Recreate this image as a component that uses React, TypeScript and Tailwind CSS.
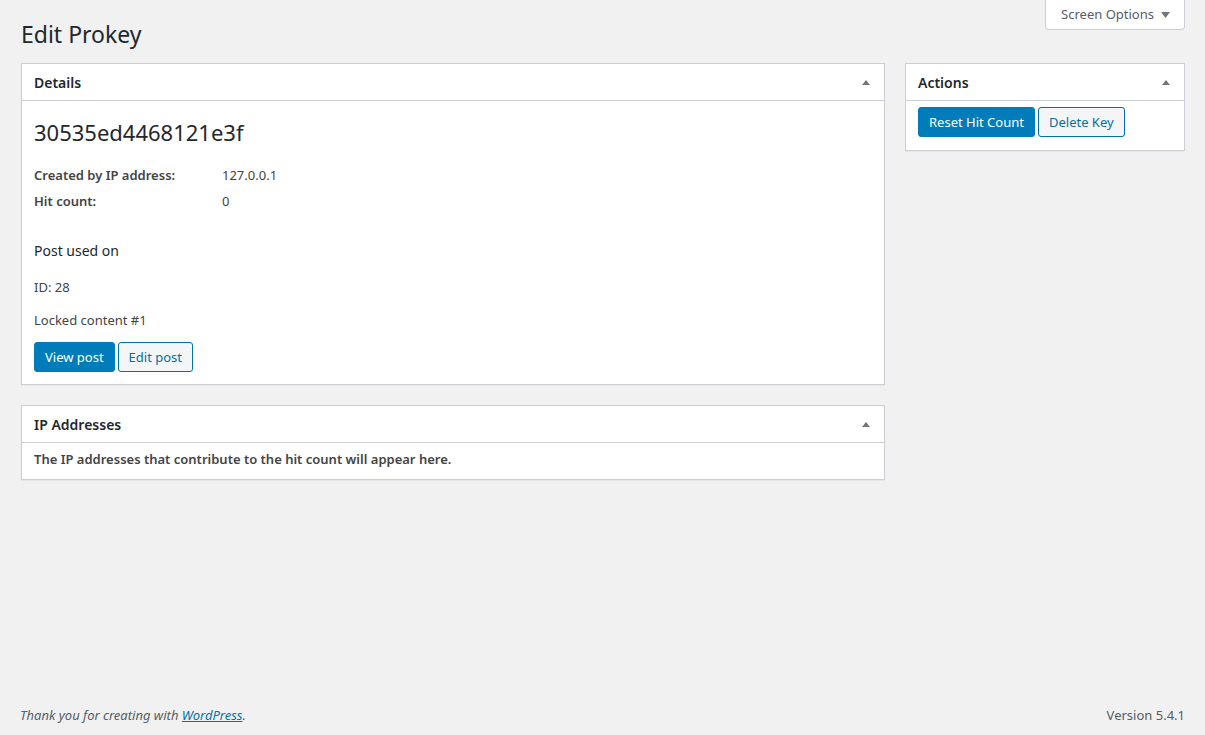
import React from "react";

const font = { fontFamily: '"Noto Sans", "Open Sans", sans-serif' };

function Toggle() {
  return (
    <svg width="10" height="6" viewBox="0 0 10 6" className="text-[#72777c]">
      <path d="M1 6 L5 1 L9 6 Z" fill="currentColor" />
    </svg>
  );
}

function Postbox({ title, children }: { title: string; children: React.ReactNode }) {
  return (
    <div className="bg-white border border-[#ccd0d4] shadow-[0_1px_1px_rgba(0,0,0,0.04)]">
      <div className="flex items-center justify-between h-[37px] pl-3 pr-[13px] border-b border-[#ccd0d4]">
        <h2 className="text-[14px] font-semibold text-[#23282d]">{title}</h2>
        <Toggle />
      </div>
      {children}
    </div>
  );
}

function PrimaryButton({ children }: { children: React.ReactNode }) {
  return (
    <button className="h-[30px] px-[10px] rounded-[3px] bg-[#007cba] border border-[#007cba] text-white text-[13px] leading-[28px]">
      {children}
    </button>
  );
}

function SecondaryButton({ children }: { children: React.ReactNode }) {
  return (
    <button className="h-[30px] px-[10px] rounded-[3px] bg-[#f3f5f6] border border-[#0071a1] text-[#0071a1] text-[13px] leading-[28px]">
      {children}
    </button>
  );
}

export default function App() {
  return (
    <div style={font} className="min-h-screen bg-[#f1f1f1] text-[#444] text-[13px] flex flex-col">
      <div className="flex justify-end pr-5">
        <div className="flex items-center gap-[7px] h-[30px] pl-[15px] pr-[14px] bg-white border border-t-0 border-[#ccd0d4] rounded-b-[4px] text-[13px] text-[#555d66]">
          <span>Screen Options</span>
          <svg width="9" height="6" viewBox="0 0 9 6">
            <path d="M0 0 L9 0 L4.5 6 Z" fill="#72777c" />
          </svg>
        </div>
      </div>

      <div className="pl-[21px] pr-5 flex-1">
        <h1 className="text-[23px] leading-[29px] font-normal text-[#23282d] -mt-[10px] mb-[14px]">Edit Prokey</h1>

        <div className="flex gap-5 items-start">
          <div className="flex-1 flex flex-col gap-5">
            <Postbox title="Details">
              <div className="px-3 pb-3">
                <div className="text-[22px] text-[#23282d] mt-[17px] leading-[28px]">30535ed4468121e3f</div>
                <div className="mt-[20px] flex flex-col gap-[8px]">
                  <div className="flex leading-[18px]">
                    <span className="w-[188px] font-semibold text-[#444]">Created by IP address:</span>
                    <span>127.0.0.1</span>
                  </div>
                  <div className="flex leading-[18px]">
                    <span className="w-[188px] font-semibold text-[#444]">Hit count:</span>
                    <span>0</span>
                  </div>
                </div>
                <div className="mt-[31px] text-[14px] text-[#23282d] leading-[20px]">Post used on</div>
                <div className="mt-[17px] leading-[18px]">ID: 28</div>
                <div className="mt-[15px] leading-[18px]">Locked content #1</div>
                <div className="mt-[13px] flex gap-[3px]">
                  <PrimaryButton>View post</PrimaryButton>
                  <SecondaryButton>Edit post</SecondaryButton>
                </div>
              </div>
            </Postbox>

            <Postbox title="IP Addresses">
              <div className="px-3 pt-[7px] pb-[11px] font-semibold leading-[18px]">
                The IP addresses that contribute to the hit count will appear here.
              </div>
            </Postbox>
          </div>

          <div className="w-[280px]">
            <Postbox title="Actions">
              <div className="px-3 pt-[6px] pb-[13px] flex gap-[3px]">
                <PrimaryButton>Reset Hit Count</PrimaryButton>
                <SecondaryButton>Delete Key</SecondaryButton>
              </div>
            </Postbox>
          </div>
        </div>
      </div>

      <div className="flex justify-between pl-5 pr-5 pb-[11px] text-[13px] text-[#555d66] leading-[18px]">
        <span className="italic">
          Thank you for creating with <a className="text-[#0073aa] underline">WordPress</a>.
        </span>
        <span>Version 5.4.1</span>
      </div>
    </div>
  );
}
